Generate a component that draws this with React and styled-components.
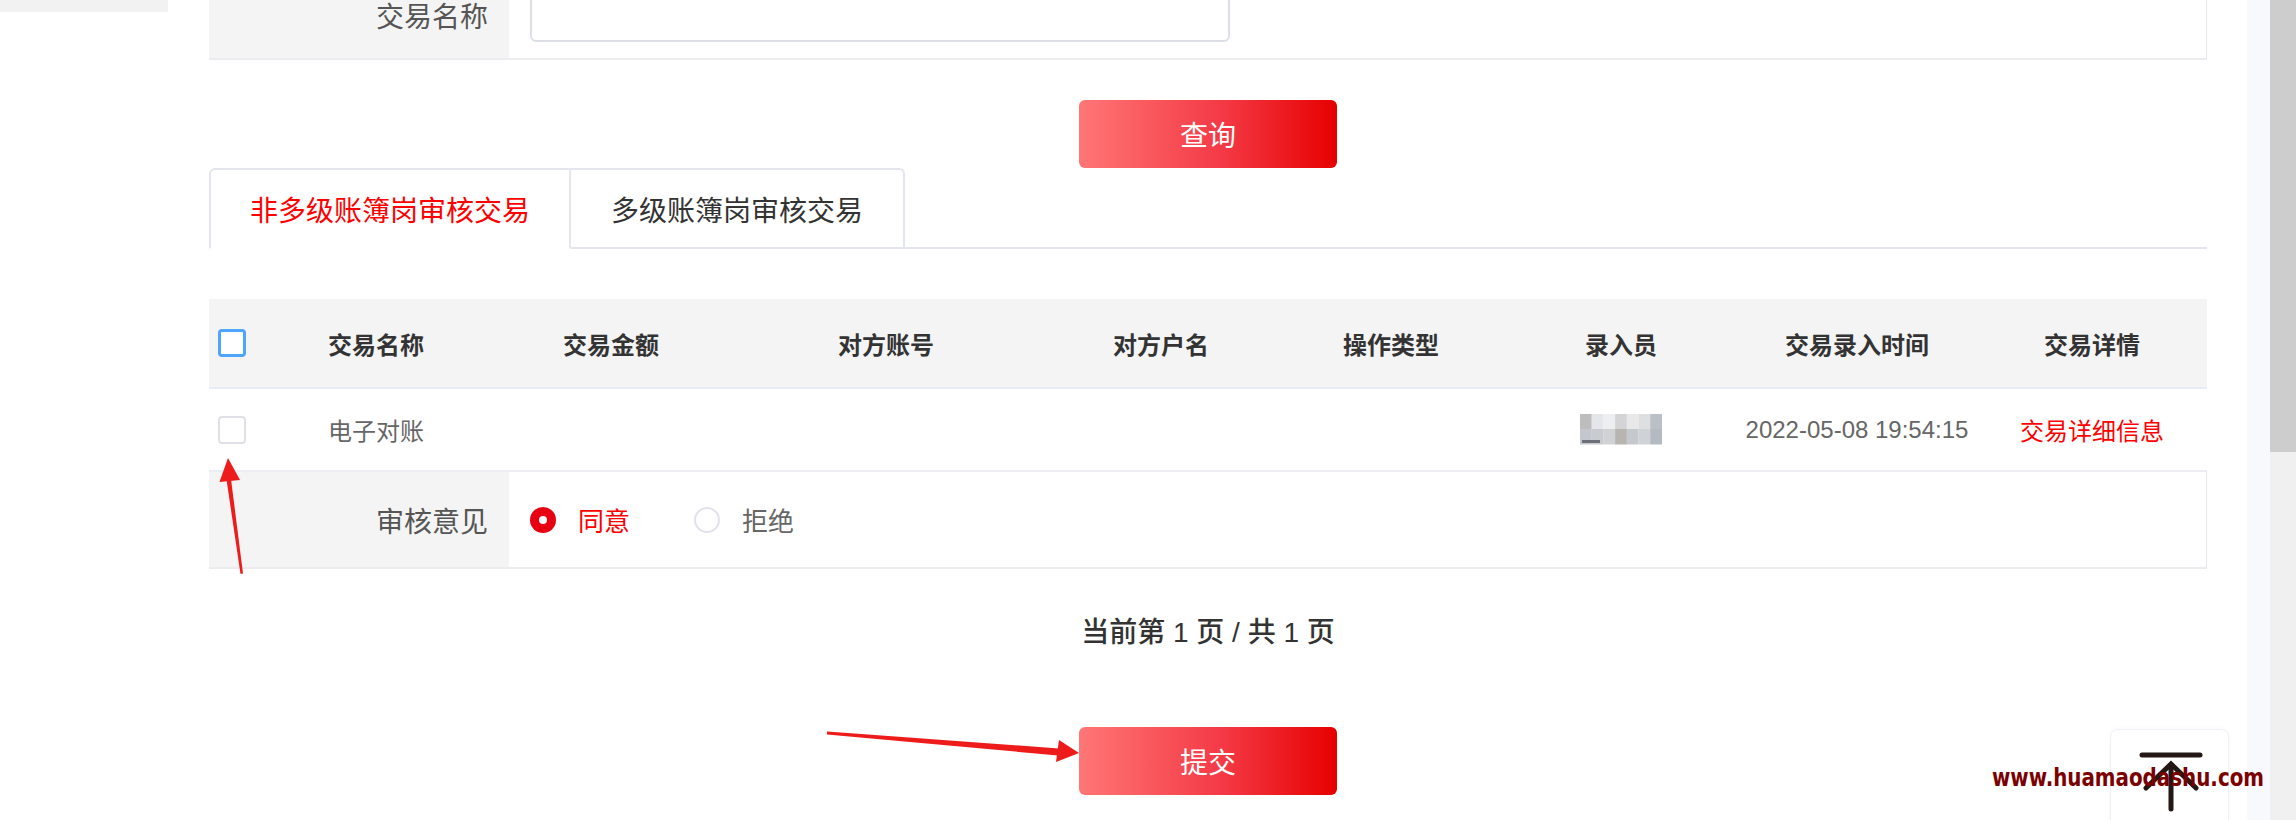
import React from 'react';
import styled, { createGlobalStyle } from 'styled-components';

const GlobalStyle = createGlobalStyle`
  html, body {
    margin: 0;
    padding: 0;
    background: #fff;
  }
  body {
    font-family: "Liberation Sans", "Noto Sans CJK SC", sans-serif;
  }
  * {
    box-sizing: border-box;
  }
`;

const Page = styled.div`
  position: relative;
  display: flex;
  width: 2296px;
  height: 820px;
  overflow: hidden;
  background: #fff;
`;

const Side = styled.div`
  width: 168px;
  flex-shrink: 0;
`;

const SideStub = styled.div`
  height: 12px;
  background: #f2f2f2;
`;

const Main = styled.div`
  flex: 1;
  display: flex;
  flex-direction: column;
  padding: 0 40px 0 41px;
`;

const Strip = styled.div`
  width: 23px;
  flex-shrink: 0;
  background: #f8f9fd;
`;

const ScrollTrack = styled.div`
  width: 26px;
  flex-shrink: 0;
  background: #f0f0f0;
`;

const ScrollThumb = styled.div`
  height: 452px;
  background: #cdcdcd;
`;

const FormRow = styled.div`
  display: flex;
  margin-top: -28px;
  height: 88px;
  border-bottom: 2px solid #ececf0;
  border-right: 1px solid #e8e8ee;
`;

const Label = styled.div`
  width: 300px;
  flex-shrink: 0;
  display: flex;
  align-items: center;
  justify-content: flex-end;
  padding-right: 21px;
  background: #f4f4f4;
  font-size: 28px;
  color: #555;
`;

const Field = styled.div`
  display: flex;
  align-items: center;
  padding-left: 21px;
`;

const Input = styled.div`
  width: 700px;
  height: 54px;
  border: 2px solid #dcdfe6;
  border-radius: 6px;
  background: #fff;
`;

const RedButton = styled.div`
  display: flex;
  align-items: center;
  justify-content: center;
  align-self: center;
  width: 258px;
  height: 68px;
  margin-top: ${(p) => p.$top}px;
  border-radius: 6px;
  background: linear-gradient(to right, #ff7676, #f43a46 55%, #e60000);
  color: #fff;
  font-size: 28px;
`;

const TabBar = styled.div`
  display: flex;
  height: 81px;
`;

const Tab = styled.div`
  width: ${(p) => p.$w}px;
  display: flex;
  align-items: center;
  justify-content: center;
  font-size: 28px;
  color: ${(p) => (p.$active ? '#ff0000' : '#333')};
  background: #fff;
  border-top: 2px solid #e4e6ee;
  border-right: 2px solid #e4e6ee;
  border-left: ${(p) => (p.$first ? '2px solid #e4e6ee' : 'none')};
  border-bottom: 2px solid ${(p) => (p.$active ? '#fff' : '#e4e6ee')};
  border-radius: ${(p) => (p.$first ? '6px 0 0 0' : '0 6px 0 0')};
`;

const TabFill = styled.div`
  flex: 1;
  border-bottom: 2px solid #e4e6ee;
`;

const cols = '48px 238px 232px 318px 232px 228px 232px 240px 230px';

const HeadRow = styled.div`
  display: grid;
  grid-template-columns: ${cols};
  align-items: center;
  margin-top: 50px;
  height: 90px;
  background: #f4f4f4;
  border-bottom: 2px solid #e8ecf4;
`;

const DataRow = styled.div`
  display: grid;
  grid-template-columns: ${cols};
  align-items: center;
  height: 83px;
  border-bottom: 2px solid #eceef4;
`;

const HeadCell = styled.div`
  text-align: center;
  font-size: 24px;
  font-weight: 700;
  color: #333;
`;

const Cell = styled.div`
  display: flex;
  justify-content: center;
  font-size: 24px;
  color: ${(p) => (p.$red ? '#ff0000' : '#666')};
  white-space: nowrap;
`;

const CheckCell = styled.div`
  padding-left: 9px;
  display: flex;
  align-items: center;
`;

const Checkbox = styled.span`
  display: block;
  width: 28px;
  height: 28px;
  border-radius: 4px;
  background: #fff;
  border: ${(p) => (p.$focus ? '3px solid #4ea4ff' : '2px solid #e0e1e8')};
`;

const AuditRow = styled.div`
  display: flex;
  height: 97px;
  border-right: 1px solid #e8e8ee;
  border-bottom: 2px solid #ececf0;
`;

const RadioGroup = styled.div`
  display: flex;
  align-items: center;
  gap: 64px;
  padding-left: 21px;
`;

const RadioItem = styled.label`
  display: flex;
  align-items: center;
  gap: 22px;
  font-size: 26px;
  color: ${(p) => (p.$on ? '#ff0000' : '#666')};
`;

const Radio = styled.span`
  width: 26px;
  height: 26px;
  border-radius: 50%;
  display: flex;
  align-items: center;
  justify-content: center;
  background: ${(p) => (p.$on ? '#e60012' : '#fff')};
  border: ${(p) => (p.$on ? 'none' : '2px solid #e1e3ea')};

  &::after {
    content: '';
    display: ${(p) => (p.$on ? 'block' : 'none')};
    width: 8px;
    height: 8px;
    border-radius: 50%;
    background: #fff;
  }
`;

const Pager = styled.div`
  margin-top: 44px;
  line-height: 40px;
  text-align: center;
  font-size: 28px;
  font-weight: 500;
  color: #333;
`;

const Overlay = styled.svg`
  position: absolute;
  left: 0;
  top: 0;
  pointer-events: none;
  z-index: 3;
`;

const BackTop = styled.div`
  position: absolute;
  left: 2110px;
  top: 729px;
  width: 119px;
  height: 130px;
  background: #fff;
  border: 1px solid #f0f1f8;
  border-radius: 8px;
  box-shadow: 0 0 6px rgba(0, 0, 0, 0.03);
  z-index: 2;
`;

const Watermark = styled.span`
  position: absolute;
  left: 1992px;
  top: 764px;
  font-family: "DejaVu Sans Condensed", "DejaVu Sans", sans-serif;
  font-stretch: condensed;
  font-weight: 700;
  font-size: 24px;
  color: #7b0000;
  transform: scaleX(0.92);
  transform-origin: left center;
  z-index: 4;
`;

const mosaic = [
  ['#bdbdbd', '#e4e6ea', '#eceef0', '#d4d4d6', '#e8e8e8', '#dedfe0', '#b9c0c8'],
  ['#c4c8ce', '#c8cbd0', '#d0d3d6', '#b8b4b0', '#c5c8cc', '#cfd3d8', '#b3bac2'],
];

const Blurred = () => (
  <svg width="82" height="32" viewBox="0 0 82 32">
    {mosaic.map((row, r) =>
      row.map((c, i) => (
        <rect key={`${r}-${i}`} x={i * 11.7} y={r * 15} width="11.8" height="15.5" fill={c} />
      ))
    )}
    <rect x="2" y="26" width="18" height="3" fill="#6d6f78" />
  </svg>
);

const heads = ['交易名称', '交易金额', '对方账号', '对方户名', '操作类型', '录入员', '交易录入时间', '交易详情'];

export default function App() {
  return (
    <Page>
      <GlobalStyle />
      <Side>
        <SideStub />
      </Side>
      <Main>
        <FormRow>
          <Label>交易名称</Label>
          <Field>
            <Input />
          </Field>
        </FormRow>

        <RedButton $top={40}>查询</RedButton>

        <TabBar>
          <Tab $w={362} $first $active>非多级账簿岗审核交易</Tab>
          <Tab $w={334}>多级账簿岗审核交易</Tab>
          <TabFill />
        </TabBar>

        <HeadRow>
          <CheckCell>
            <Checkbox $focus />
          </CheckCell>
          {heads.map((h) => (
            <HeadCell key={h}>{h}</HeadCell>
          ))}
        </HeadRow>

        <DataRow>
          <CheckCell>
            <Checkbox />
          </CheckCell>
          <Cell>电子对账</Cell>
          <Cell />
          <Cell />
          <Cell />
          <Cell />
          <Cell><Blurred /></Cell>
          <Cell>2022-05-08 19:54:15</Cell>
          <Cell $red>交易详细信息</Cell>
        </DataRow>

        <AuditRow>
          <Label>审核意见</Label>
          <RadioGroup>
            <RadioItem $on>
              <Radio $on />
              同意
            </RadioItem>
            <RadioItem>
              <Radio />
              拒绝
            </RadioItem>
          </RadioGroup>
        </AuditRow>

        <Pager>当前第 1 页 / 共 1 页</Pager>

        <RedButton $top={74}>提交</RedButton>
      </Main>
      <Strip />
      <ScrollTrack>
        <ScrollThumb />
      </ScrollTrack>

      <BackTop>
        <svg width="119" height="100" viewBox="0 0 119 100">
          <g stroke="#231815" strokeWidth="5" strokeLinecap="round" fill="none">
            <line x1="31" y1="25" x2="89" y2="25" />
            <polyline points="35,58 60,34 85,58" strokeLinejoin="miter" />
            <line x1="60" y1="35" x2="60" y2="79" />
          </g>
        </svg>
      </BackTop>

      <Watermark>www.huamaodashu.com</Watermark>

      <Overlay width="2296" height="820" viewBox="0 0 2296 820">
        <polygon points="240.5,574 243,573.5 231,479 226.5,479.5" fill="#ee1b1b" />
        <polygon points="228,458 219.5,482 240,480" fill="#ee1b1b" />
        <polygon points="827,731.5 827,734.5 1058,755.5 1059,748.5" fill="#ee1b1b" />
        <polygon points="1079,753 1059,740 1056,762" fill="#ee1b1b" />
      </Overlay>
    </Page>
  );
}
